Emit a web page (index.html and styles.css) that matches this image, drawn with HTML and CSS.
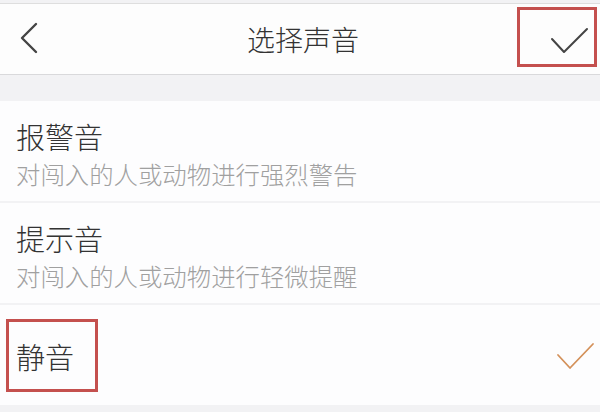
FILE: index.html
```html
<!DOCTYPE html>
<html lang="zh-CN">
<head>
  <meta charset="UTF-8">
  <meta name="viewport" content="width=device-width, initial-scale=1.0">
  <title>选择声音</title>
  <link rel="stylesheet" href="styles.css">
</head>
<body>
  <div class="screen">
    <header class="nav">
      <button class="back-btn">
        <svg width="44" height="44" viewBox="0 0 44 44" fill="none" stroke="currentColor" stroke-width="2.4" stroke-linecap="round" stroke-linejoin="round">
          <polyline points="28 7 14 21 28 35"></polyline>
        </svg>
      </button>
      <h1 class="nav-title">选择声音</h1>
      <button class="confirm-btn">
        <svg width="74" height="54" viewBox="0 0 74 54" fill="none" stroke="currentColor" stroke-width="2" stroke-linecap="round" stroke-linejoin="round">
          <polyline points="32 29 44 42 67 19"></polyline>
        </svg>
      </button>
    </header>

    <ul class="options">
      <li class="option">
        <div class="option-title">报警音</div>
        <div class="option-desc">对闯入的人或动物进行强烈警告</div>
      </li>
      <li class="option">
        <div class="option-title">提示音</div>
        <div class="option-desc">对闯入的人或动物进行轻微提醒</div>
      </li>
      <li class="option option-single selected">
        <div class="option-title marked">静音</div>
        <svg class="tick" width="40" height="40" viewBox="0 0 40 40" fill="none" stroke="currentColor" stroke-width="1.8" stroke-linecap="round" stroke-linejoin="round">
          <polyline points="2 20 14 33 37 9"></polyline>
        </svg>
      </li>
    </ul>
  </div>
</body>
</html>
```

FILE: styles.css
```css
:root {
  --bg: #f2f2f4;
  --text: #333333;
  --muted: #a0a0a0;
  --line: #d9d9db;
  --mark: #c4504e;
  --accent: #d4915a;
}

* {
  margin: 0;
  padding: 0;
  box-sizing: border-box;
}

body {
  font-family: "Noto Sans CJK SC", "Noto Sans", sans-serif;
  font-weight: 300;
  background-color: var(--bg);
  color: var(--text);
}

.screen {
  width: 600px;
  height: 412px;
  padding-top: 3px;
  overflow: hidden;
}

.nav {
  display: flex;
  align-items: center;
  height: 72px;
  background: #fdfdfd;
  border-top: 1px solid #dedede;
  border-bottom: 1px solid var(--line);
}

.back-btn,
.confirm-btn {
  background: none;
  border: none;
  color: #444;
  display: flex;
  align-items: center;
  justify-content: center;
}

.back-btn {
  width: 44px;
  height: 44px;
  margin-left: 8px;
}

.nav-title {
  flex: 1;
  text-align: center;
  font-size: 28px;
  line-height: 34px;
  font-weight: 300;
  padding-left: 37px;
}

.confirm-btn {
  width: 80px;
  height: 60px;
  align-self: flex-start;
  margin-top: 3px;
  margin-right: 3px;
  border: 3px solid var(--mark);
}

.options {
  list-style: none;
  margin-top: 26px;
}

.option {
  height: 100px;
  margin-bottom: 2px;
  padding: 18px 16px 0;
  background: #fdfdfe;
}

.option-title {
  font-size: 29px;
  line-height: 34px;
}

.option-desc {
  margin-top: 6px;
  font-size: 24.4px;
  line-height: 30px;
  color: var(--muted);
}

.option-single {
  display: flex;
  align-items: center;
  justify-content: space-between;
  padding: 0 4px 0 6px;
}

.marked {
  border: 3px solid var(--mark);
  padding: 17px 21px 16px 7px;
}

.tick {
  color: var(--accent);
}
```
